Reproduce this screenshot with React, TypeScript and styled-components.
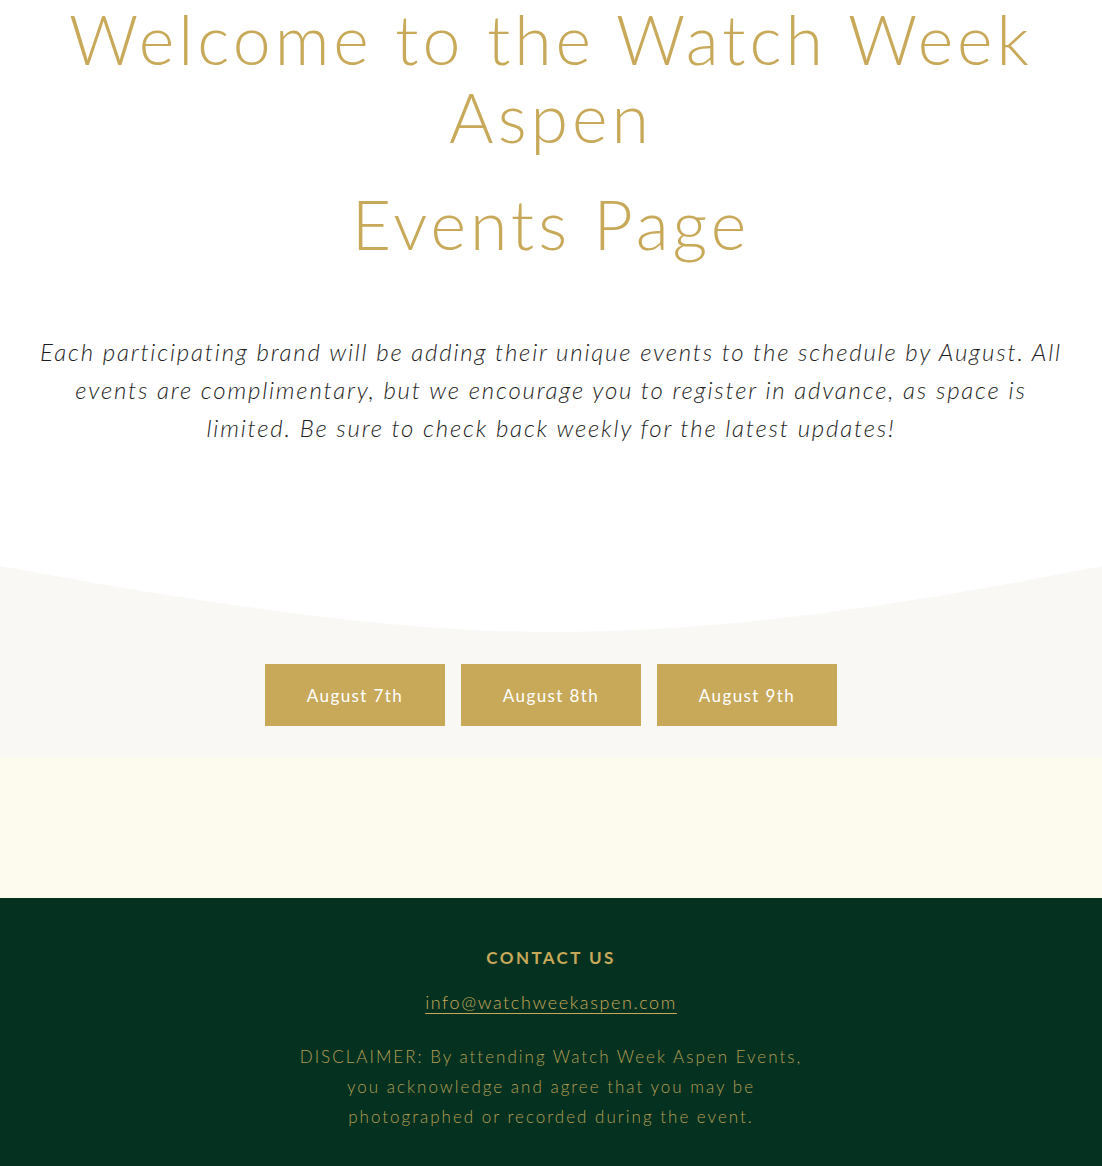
import React from "react";
import styled, { createGlobalStyle } from "styled-components";

const GOLD = "#c8a95a";

const GlobalStyle = createGlobalStyle`
  html, body { margin: 0; padding: 0; background: #ffffff; }
  body { font-family: "Lato", "Open Sans", sans-serif; }
  * { box-sizing: border-box; }
`;

const Page = styled.div`
  display: flex;
  flex-direction: column;
  width: 100%;
`;

const Hero = styled.section`
  display: flex;
  flex-direction: column;
  align-items: center;
  background: #ffffff;
  padding: 0 20px 119px;
`;

const Title = styled.h1<{ $gap?: number }>`
  margin: ${(p) => p.$gap ?? 0}px 0 0;
  font-family: "Lato", sans-serif;
  font-weight: 300;
  font-size: 68px;
  line-height: 78px;
  letter-spacing: 4px;
  color: ${GOLD};
  text-align: center;
  max-width: 1000px;
`;

const Intro = styled.p`
  margin: 70px 0 0;
  font-family: "Lato", sans-serif;
  font-style: italic;
  font-weight: 300;
  font-size: 24px;
  line-height: 38px;
  letter-spacing: 1.8px;
  color: #1e1e1e;
  text-align: center;
  max-width: 1028px;
`;

const DatesSection = styled.section`
  position: relative;
  background: #f9f8f4;
  display: flex;
  justify-content: center;
  padding: 98px 0 31px;
`;

const Curve = styled.svg`
  position: absolute;
  top: 0;
  left: 0;
  width: 100%;
  height: 67px;
  display: block;
`;

const ButtonRow = styled.div`
  position: relative;
  display: flex;
  gap: 16px;
`;

const DateButton = styled.button`
  width: 180px;
  height: 62px;
  padding: 0;
  border: none;
  border-radius: 0;
  background: ${GOLD};
  color: #ffffff;
  font-family: "Lato", sans-serif;
  font-weight: 400;
  font-size: 17px;
  letter-spacing: 1.4px;
  cursor: pointer;
`;

const Empty = styled.section`
  height: 141px;
  background: #fdfbee;
`;

const Footer = styled.footer`
  background: #053220;
  display: flex;
  flex-direction: column;
  align-items: center;
  padding: 48px 20px 40px;
  color: ${GOLD};
  text-align: center;
`;

const FooterTitle = styled.h3`
  margin: 0;
  font-family: "Lato", sans-serif;
  font-weight: 700;
  font-size: 17px;
  line-height: 24px;
  letter-spacing: 2.4px;
`;

const Email = styled.a`
  margin-top: 20px;
  font-family: "Lato", sans-serif;
  font-weight: 300;
  font-size: 18px;
  line-height: 24px;
  letter-spacing: 1.6px;
  color: ${GOLD};
  text-decoration: underline;
  text-underline-offset: 4px;
  text-decoration-thickness: 1px;
`;

const Disclaimer = styled.p`
  margin: 28px 0 0;
  max-width: 520px;
  font-family: "Lato", sans-serif;
  font-weight: 300;
  font-size: 17px;
  line-height: 30px;
  letter-spacing: 2px;
  color: #b39e55;
`;

export default function App() {
  return (
    <Page>
      <GlobalStyle />
      <Hero>
        <Title>Welcome to the Watch Week Aspen</Title>
        <Title $gap={29}>Events Page</Title>
        <Intro>
          Each participating brand will be adding their unique events to the
          schedule by August. All events are complimentary, but we encourage you
          to register in advance, as space is limited. Be sure to check back
          weekly for the latest updates!
        </Intro>
      </Hero>
      <DatesSection>
        <Curve viewBox="0 0 1102 67" preserveAspectRatio="none" aria-hidden="true">
          <path d="M0 0 C 260 48, 420 66, 551 66 C 700 66, 860 48, 1102 0 Z" fill="#ffffff" />
        </Curve>
        <ButtonRow>
          <DateButton>August 7th</DateButton>
          <DateButton>August 8th</DateButton>
          <DateButton>August 9th</DateButton>
        </ButtonRow>
      </DatesSection>
      <Empty />
      <Footer>
        <FooterTitle>CONTACT US</FooterTitle>
        <Email href="#">info@watchweekaspen.com</Email>
        <Disclaimer>
          DISCLAIMER: By attending Watch Week Aspen Events, you acknowledge and
          agree that you may be photographed or recorded during the event.
        </Disclaimer>
      </Footer>
    </Page>
  );
}
